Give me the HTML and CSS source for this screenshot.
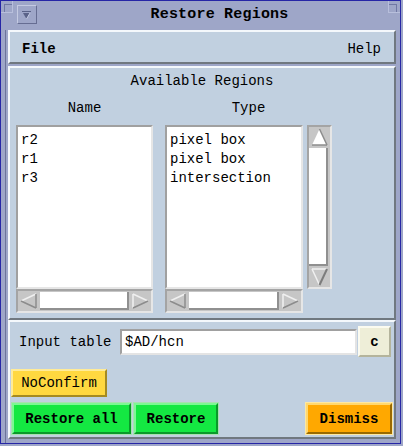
FILE: index.html
```html
<!DOCTYPE html>
<html>
<head>
<meta charset="utf-8">
<title>Restore Regions</title>
<link rel="stylesheet" href="styles.css">
</head>
<body>
<div class="window">
  <div class="corner tl"></div>
  <div class="corner tr"></div>
  <div class="titlebar">
    <div class="menu-btn">
      <svg width="18" height="17" viewBox="0 0 18 17">
        <rect x="4" y="5" width="9" height="1" fill="#5a6288"/>
        <polygon points="5,7 12,7 8.5,13" fill="#5a6288"/>
        <line x1="12" y1="7" x2="8.5" y2="13" stroke="#c4cae2" stroke-width="1"/>
      </svg>
    </div>
    <div class="title">Restore Regions</div>
  </div>
  <div class="client">
    <div class="panel menubar">
      <span class="menu file">File</span>
      <span class="menu">Help</span>
    </div>
    <div class="panel main">
      <div class="heading">Available Regions</div>
      <div class="columns">
        <div class="col name-col">
          <div class="col-title">Name</div>
          <div class="list">
            <div class="item">r2</div>
            <div class="item">r1</div>
            <div class="item">r3</div>
          </div>
          <div class="hscroll">
            <svg class="arrow" width="21" height="20" viewBox="0 0 21 20">
              <polygon points="3,10 18,3 18,17" fill="#c6c6c6"/>
              <line x1="3" y1="10" x2="18" y2="3" stroke="#f0f0f0" stroke-width="1.5"/>
              <line x1="3" y1="10" x2="18" y2="17" stroke="#8c8c8c" stroke-width="1.5"/>
              <line x1="18" y1="3" x2="18" y2="17" stroke="#8c8c8c" stroke-width="1.5"/>
            </svg>
            <div class="hthumb"></div>
            <svg class="arrow" width="21" height="20" viewBox="0 0 21 20">
              <polygon points="18,10 3,3 3,17" fill="#c6c6c6"/>
              <line x1="3" y1="3" x2="3" y2="17" stroke="#f0f0f0" stroke-width="1.5"/>
              <line x1="3" y1="3" x2="18" y2="10" stroke="#f0f0f0" stroke-width="1.5"/>
              <line x1="3" y1="17" x2="18" y2="10" stroke="#8c8c8c" stroke-width="1.5"/>
            </svg>
          </div>
        </div>
        <div class="col type-col">
          <div class="col-title">Type</div>
          <div class="list-row">
            <div class="list type-list">
              <div class="item">pixel box</div>
              <div class="item">pixel box</div>
              <div class="item">intersection</div>
            </div>
            <div class="vscroll">
              <svg class="varrow" width="21" height="20" viewBox="0 0 21 20">
                <polygon points="10.5,2 3,18 18,18" fill="#ffffff"/>
                <line x1="10.5" y1="2" x2="18" y2="18" stroke="#8c8c8c" stroke-width="1.5"/>
                <line x1="3" y1="18" x2="18" y2="18" stroke="#8c8c8c" stroke-width="1.5"/>
              </svg>
              <div class="vthumb"></div>
              <svg class="varrow" width="21" height="20" viewBox="0 0 21 20">
                <polygon points="10.5,18 3,2 18,2" fill="#c6c6c6"/>
                <line x1="3" y1="2" x2="18" y2="2" stroke="#f0f0f0" stroke-width="1.5"/>
                <line x1="3" y1="2" x2="10.5" y2="18" stroke="#f0f0f0" stroke-width="1.5"/>
                <line x1="18" y1="2" x2="10.5" y2="18" stroke="#7c7c7c" stroke-width="2"/>
              </svg>
            </div>
          </div>
          <div class="hscroll type-h">
            <svg class="arrow" width="21" height="20" viewBox="0 0 21 20">
              <polygon points="3,10 18,3 18,17" fill="#c6c6c6"/>
              <line x1="3" y1="10" x2="18" y2="3" stroke="#f0f0f0" stroke-width="1.5"/>
              <line x1="3" y1="10" x2="18" y2="17" stroke="#8c8c8c" stroke-width="1.5"/>
              <line x1="18" y1="3" x2="18" y2="17" stroke="#8c8c8c" stroke-width="1.5"/>
            </svg>
            <div class="hthumb"></div>
            <svg class="arrow" width="21" height="20" viewBox="0 0 21 20">
              <polygon points="18,10 3,3 3,17" fill="#c6c6c6"/>
              <line x1="3" y1="3" x2="3" y2="17" stroke="#f0f0f0" stroke-width="1.5"/>
              <line x1="3" y1="3" x2="18" y2="10" stroke="#f0f0f0" stroke-width="1.5"/>
              <line x1="3" y1="17" x2="18" y2="10" stroke="#8c8c8c" stroke-width="1.5"/>
            </svg>
          </div>
        </div>
      </div>
    </div>
    <div class="panel bottom">
      <div class="input-row">
        <span class="label">Input table</span>
        <div class="entry">$AD/hcn</div>
        <div class="btn cbtn">c</div>
      </div>
      <div class="confirm-row">
        <div class="btn noconfirm">NoConfirm</div>
      </div>
      <div class="action-row">
        <div class="btn green restore-all">Restore all</div>
        <div class="btn green restore">Restore</div>
        <div class="btn orange dismiss">Dismiss</div>
      </div>
    </div>
  </div>
</div>
</body>
</html>
```
FILE: styles.css
```css
* { box-sizing: border-box; }
html, body { margin: 0; padding: 0; }
body {
  width: 403px;
  height: 446px;
  background: #9ea6c8;
  font-family: "Liberation Mono", "DejaVu Sans Mono", monospace;
  font-size: 14px;
  color: #000;
  overflow: hidden;
}
.window {
  position: relative;
  width: 401px;
  height: 444px;
  border: 1px solid #2626a6;
  background: #9ea6c8;
  display: flex;
  flex-direction: column;
}
.corner {
  position: absolute;
  width: 12px;
  height: 12px;
}
.corner.tl { left: 0; top: 0; border-right: 1px solid #b8bfdc; border-bottom: 1px solid #b8bfdc; background: linear-gradient(#7078a4, #7078a4) 3px 3px / 1px 9px no-repeat, linear-gradient(#7078a4, #7078a4) 3px 3px / 9px 1px no-repeat; }
.corner.tr { right: 0; top: 0; border-left: 1px solid #b8bfdc; border-bottom: 1px solid #b8bfdc; background: linear-gradient(#7078a4, #7078a4) 7px 3px / 1px 9px no-repeat, linear-gradient(#7078a4, #7078a4) 0 3px / 8px 1px no-repeat; }
.titlebar {
  height: 29px;
  flex: none;
  display: flex;
  align-items: flex-start;
  padding-left: 16px;
  padding-top: 4px;
}
.menu-btn {
  width: 20px;
  height: 19px;
  border: 1px solid;
  border-color: #c4cae2 #666d92 #666d92 #c4cae2;
  display: flex;
  align-items: center;
  justify-content: center;
}
.title {
  flex: 1;
  text-align: center;
  font-weight: bold;
  font-size: 15px;
  line-height: 20px;
  letter-spacing: 0.2px;
  padding-left: 2px;
}
.client {
  margin-left: 4px;
  margin-right: 4px;
  border-left: 1px solid #6c739a;
  padding-left: 2px;
  display: flex;
  flex-direction: column;
  flex: 1;
}
.panel {
  width: 388px;
  background: #c1d0e0;
  border: 2px solid;
  border-color: #f4f8fc #707880 #707880 #f4f8fc;
}
.menubar {
  height: 34px;
  display: flex;
  justify-content: space-between;
  align-items: center;
  padding: 4px 13px 0 12px;
}
.menu.file { font-weight: bold; }
.main {
  margin-top: 2px;
  height: 254px;
  padding: 5px 0 5px 6px;
}
.heading {
  text-align: center;
  line-height: 16px;
  padding-right: 6px;
}
.columns {
  display: flex;
  gap: 12px;
  margin-top: 11px;
}
.col { display: flex; flex-direction: column; }
.name-col { width: 137px; }
.type-col { width: 167px; }
.col-title {
  text-align: center;
  line-height: 16px;
  margin-bottom: 9px;
}
.list {
  height: 164px;
  background: #fff;
  border: 2px solid;
  border-color: #a0a0a0 #e6e6e6 #e6e6e6 #a0a0a0;
  padding: 4px 3px 0;
}
.item {
  line-height: 19px;
  white-space: nowrap;
}
.list-row { display: flex; gap: 4px; }
.type-list { width: 138px; }
.hscroll {
  width: 137px;
  height: 24px;
  background: #c6c6c6;
  border: 2px solid;
  border-color: #a4a4a4 #e6e6e6 #e6e6e6 #a4a4a4;
  display: flex;
  align-items: flex-start;
}
.type-h { width: 138px; }
.arrow { flex: none; display: block; }
.hthumb {
  flex: 1;
  margin: 1px 1px 0;
  height: 18px;
  background: #fff;
  border-right: 2px solid #909090;
  border-bottom: 2px solid #909090;
}
.vscroll {
  width: 25px;
  height: 164px;
  background: #c6c6c6;
  border: 2px solid;
  border-color: #a4a4a4 #e6e6e6 #e6e6e6 #a4a4a4;
  display: flex;
  flex-direction: column;
  align-items: flex-start;
}
.varrow { flex: none; display: block; }
.vthumb {
  flex: 1;
  width: 19px;
  margin: 1px 0;
  background: #fff;
  border-right: 2px solid #909090;
  border-bottom: 2px solid #909090;
}
.bottom {
  height: 119px;
  padding: 4px 2px 3px 0;
  display: flex;
  flex-direction: column;
}
.input-row {
  display: flex;
  align-items: center;
  height: 31px;
  padding-left: 9px;
}
.label { width: 101px; flex: none; }
.entry {
  width: 237px;
  height: 26px;
  background: #fff;
  border: 2px solid;
  border-color: #a0a0a0 #e4e4e4 #e4e4e4 #a0a0a0;
  padding: 0 3px;
  line-height: 22px;
}
.btn {
  display: flex;
  align-items: center;
  justify-content: center;
  border: 2px solid;
}
.cbtn {
  width: 33px;
  height: 31px;
  margin-left: 1px;
  background: #eeeed8;
  border-color: #fbfbf0 #b4b49c #b4b49c #fbfbf0;
  font-weight: bold;
}
.confirm-row {
  margin-top: 12px;
  padding-left: 1px;
  display: flex;
}
.noconfirm {
  width: 96px;
  height: 28px;
  background: #ffd840;
  border-color: #ffeb98 #a48a22 #a48a22 #ffeb98;
}
.action-row {
  margin-top: 6px;
  padding-left: 2px;
  display: flex;
  gap: 3px;
}
.green {
  height: 31px;
  background: #14e842;
  border-color: #7cf894 #0a9a2a #0a9a2a #7cf894;
  font-weight: bold;
  outline: 1px solid #a8e0b0;
}
.restore-all { width: 119px; }
.restore { width: 84px; }
.orange {
  height: 31px;
  width: 86px;
  margin-left: auto;
  background: #ffa800;
  border-color: #ffd870 #9a6a00 #9a6a00 #ffd870;
  font-weight: bold;
  outline: 1px solid #ffe8a0;
}
```
